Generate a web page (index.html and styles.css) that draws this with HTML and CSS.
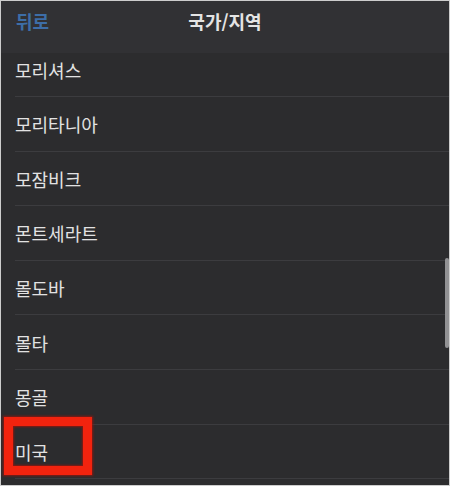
FILE: index.html
```html
<!DOCTYPE html>
<html lang="ko">
<head>
<meta charset="utf-8">
<title>국가/지역</title>
<link rel="stylesheet" href="styles.css">
</head>
<body>
<div class="screen">
  <header class="navbar">
    <span class="back">뒤로</span>
    <span class="title">국가/지역</span>
  </header>
  <div class="list-viewport">
    <ul class="list">
      <li class="row"><span>모리셔스</span></li>
      <li class="row"><span>모리타니아</span></li>
      <li class="row"><span>모잠비크</span></li>
      <li class="row"><span>몬트세라트</span></li>
      <li class="row"><span>몰도바</span></li>
      <li class="row"><span>몰타</span></li>
      <li class="row"><span>몽골</span></li>
      <li class="row"><span>미국</span></li>
    </ul>
    <div class="scrollbar"></div>
  </div>
  <div class="highlight"></div>
</div>
</body>
</html>
```
FILE: styles.css
```css
* { box-sizing: border-box; }
html, body { margin: 0; padding: 0; background: #ffffff; }
body {
  font-family: "Noto Sans CJK KR", "Noto Sans", "Liberation Sans", sans-serif;
}
.screen {
  position: relative;
  width: 450px;
  height: 486px;
  border: 1px solid #cdcdcd;
  background: #2c2c2e;
  display: flex;
  flex-direction: column;
  overflow: hidden;
}
.navbar {
  position: relative;
  height: 52px;
  flex: none;
  background: #313134;
  padding: 8px 0 0 15px;
  font-size: 18px;
  line-height: 24px;
}
.back {
  color: #3d6ea8;
  font-weight: 700;
}
.title {
  position: absolute;
  left: 0;
  right: 0;
  top: 8px;
  text-align: center;
  color: #e4e4e4;
  font-weight: 700;
}
.list-viewport {
  position: relative;
  flex: 1;
  overflow: hidden;
}
.list {
  list-style: none;
  margin: -10.6px 0 0 0;
  padding: 0;
}
.row {
  margin-left: 14px;
  height: 54.6px;
  border-bottom: 1px solid #3c3c3f;
  display: flex;
  align-items: center;
  color: #e2e2e2;
  font-size: 18px;
  line-height: 24px;
  padding-top: 1px;
}
.scrollbar {
  position: absolute;
  right: 0;
  top: 205px;
  width: 4px;
  height: 90px;
  border-radius: 2px;
  background: #929294;
}
.highlight {
  position: absolute;
  left: 3px;
  top: 416px;
  width: 88px;
  height: 58px;
  border: 9px solid #f2230e;
  box-shadow: 0 0 2px 1px rgba(160, 20, 10, 0.8), inset 0 0 2px 1px rgba(160, 20, 10, 0.8);
}
```
